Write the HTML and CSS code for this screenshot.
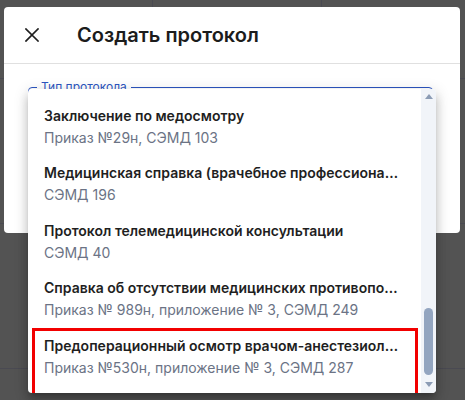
FILE: index.html
```html
<!DOCTYPE html>
<html lang="ru">
<head>
<meta charset="utf-8">
<title>Создать протокол</title>
<link rel="stylesheet" href="styles.css">
</head>
<body>
<div class="backdrop">
  <div class="modal">
    <div class="modal-header">
      <svg class="close-icon" viewBox="0 0 14 14" width="14" height="14" aria-hidden="true">
        <path d="M1 1 L13 13 M13 1 L1 13" stroke="#1f1f1f" stroke-width="1.7" stroke-linecap="square" fill="none"/>
      </svg>
      <h1 class="modal-title">Создать протокол</h1>
    </div>
    <div class="modal-body">
      <div class="field">
        <fieldset class="field-outline">
          <legend class="field-label">Тип протокола</legend>
          <div class="field-input"></div>
        </fieldset>
        <div class="dropdown">
          <ul class="option-list">
            <li class="option">
              <div class="option-title">Заключение по медосмотру</div>
              <div class="option-sub">Приказ №29н, СЭМД 103</div>
            </li>
            <li class="option">
              <div class="option-title">Медицинская справка (врачебное профессионально-консультативное заключение)</div>
              <div class="option-sub">СЭМД 196</div>
            </li>
            <li class="option">
              <div class="option-title">Протокол телемедицинской консультации</div>
              <div class="option-sub">СЭМД 40</div>
            </li>
            <li class="option">
              <div class="option-title">Справка об отсутствии медицинских противопоказаний</div>
              <div class="option-sub">Приказ № 989н, приложение № 3, СЭМД 249</div>
            </li>
            <li class="option option-marked">
              <div class="option-title">Предоперационный осмотр врачом-анестезиологом-реаниматологом</div>
              <div class="option-sub">Приказ №530н, приложение № 3, СЭМД 287</div>
            </li>
          </ul>
          <div class="scrollbar">
            <div class="scroll-btn"><span class="tri-up"></span></div>
            <div class="scroll-track"><div class="scroll-thumb"></div></div>
            <div class="scroll-btn"><span class="tri-down"></span></div>
          </div>
        </div>
      </div>
    </div>
  </div>
</div>
</body>
</html>
```
FILE: styles.css
```css
* { box-sizing: border-box; }
html, body { margin: 0; padding: 0; }
body {
  width: 465px;
  height: 400px;
  overflow: hidden;
  font-family: "Inter", "Noto Sans", sans-serif;
}
.backdrop {
  width: 465px;
  height: 400px;
  padding: 7px 5px 0 4px;
  background-color: #535353;
  background-image:
    linear-gradient(#4a4a52, #4a4a52),
    linear-gradient(#4a4a52, #4a4a52),
    repeating-linear-gradient(to bottom, transparent 0, transparent 78px, #4a4a52 78px, #4a4a52 79px, transparent 79px, transparent 145px);
  background-size: 1px 8px, 1px 8px, 100% 100%;
  background-position: 152px 0, 321px 0, 0 0;
  background-repeat: no-repeat, no-repeat, no-repeat;
}
.modal {
  width: 456px;
  height: 226px;
  background: #ffffff;
  border-radius: 4px;
}
.modal-header {
  height: 57px;
  display: flex;
  align-items: center;
  padding-left: 21px;
  border-bottom: 1px solid #e0e0e0;
}
.close-icon { display: block; flex: none; }
.modal-title {
  margin: 0 0 0 38px;
  font-size: 20px;
  font-weight: 600;
  color: #1c1c1c;
  letter-spacing: 0;
}
.modal-body {
  padding: 17px 27px 0 24px;
}
.field {
  position: relative;
}
.field-outline {
  margin: 0;
  padding: 0 12px;
  border: 1.5px solid #2c55c0;
  border-radius: 4px;
  min-width: 0;
}
.field-label {
  padding: 0 4px;
  margin-left: -4px;
  font-size: 12px;
  line-height: 12px;
  color: #2c55c0;
}
.field-input { height: 48px; }
.dropdown {
  position: absolute;
  top: 7.5px;
  left: 0;
  width: 408px;
  height: 304px;
  background: #ffffff;
  border-radius: 4px;
  display: flex;
  overflow: hidden;
  box-shadow: 0 5px 5px -3px rgba(0,0,0,.2), 0 8px 10px 1px rgba(0,0,0,.14), 0 3px 14px 2px rgba(0,0,0,.12);
}
.option-list {
  list-style: none;
  margin: 0;
  padding: 9.5px 0 0 0;
  flex: 1;
  min-width: 0;
}
.option {
  position: relative;
  padding: 6.75px 16px 6.75px 16px;
}
.option-title {
  font-size: 14px;
  line-height: 22px;
  font-weight: 600;
  color: #1f1f1f;
  white-space: nowrap;
  overflow: hidden;
  text-overflow: ellipsis;
}
.option-sub {
  font-size: 14px;
  line-height: 22px;
  font-weight: 400;
  color: #6b7385;
  white-space: nowrap;
  overflow: hidden;
  text-overflow: ellipsis;
}
.option-marked::after {
  content: "";
  position: absolute;
  top: 0;
  left: 4px;
  right: 3px;
  height: 63px;
  border: 3px solid #f20000;
}
.scrollbar {
  width: 15px;
  flex: none;
  background: #f1f4f9;
  display: flex;
  flex-direction: column;
}
.scroll-btn {
  height: 16px;
  display: flex;
  align-items: center;
  justify-content: center;
}
.tri-up {
  width: 0; height: 0;
  border-left: 4.5px solid transparent;
  border-right: 4.5px solid transparent;
  border-bottom: 5px solid #8c9cb5;
}
.tri-down {
  width: 0; height: 0;
  border-left: 4.5px solid transparent;
  border-right: 4.5px solid transparent;
  border-top: 5px solid #8c9cb5;
}
.scroll-track {
  flex: 1;
  padding: 0 3px;
}
.scroll-thumb {
  margin-top: 203px;
  height: 67px;
  border-radius: 5px;
  background: #93a5c0;
}
```
